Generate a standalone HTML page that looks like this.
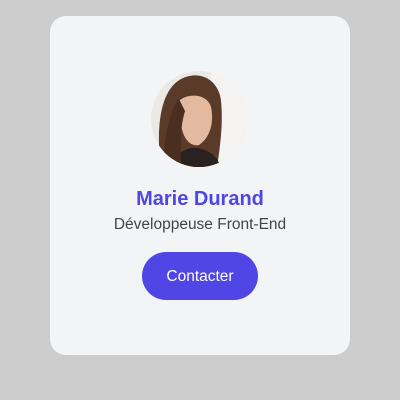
<!DOCTYPE html>
<html><head><meta charset="utf-8"><style>
html,body{margin:0;padding:0;width:400px;height:400px;background:#cccccc;font-family:"Liberation Sans",sans-serif;overflow:hidden}
.card{position:absolute;left:50px;top:16px;width:300px;height:339px;background:#f3f4f6;border-radius:16px}
.av{position:absolute;left:151px;top:71px;width:96px;height:96px;border-radius:50%;overflow:hidden;background:#e8e6e3}
.name{position:absolute;left:0;width:400px;top:188px;text-align:center;font-weight:bold;font-size:20px;color:#4f46e5}
.sub{position:absolute;left:0;width:400px;top:216px;text-align:center;font-size:15.5px;color:#444}
.btn{position:absolute;left:142px;top:252px;width:116px;height:48px;border-radius:24px;background:#4f46e5;color:#fff;font-size:15.5px;text-align:center;line-height:50px}
</style></head><body>
<div class="card"></div>
<div class="av"><svg width="96" height="96" viewBox="0 0 96 96">
<rect width="96" height="96" fill="#ebe9e6"/>
<rect x="60" width="36" height="96" fill="#f4f3f1"/>
<path d="M10 96 C5 60 8 20 30 8 C50 -2 68 10 70 30 C72 50 70 70 66 96 Z" fill="#5a3a28"/>
<path d="M28 30 C36 22 56 22 60 36 C63 50 60 66 48 74 C38 76 32 66 30 54 Z" fill="#e3b9a0"/>
<path d="M20 96 C26 80 40 74 50 78 C60 80 66 86 70 96 Z" fill="#2a2220"/>
<path d="M14 96 C12 70 18 40 28 28 L34 40 C28 60 30 80 30 96 Z" fill="#4a2e20"/>
</svg></div>
<div class="name">Marie Durand</div>
<div class="sub">Développeuse Front-End</div>
<div class="btn">Contacter</div>
</body></html>
